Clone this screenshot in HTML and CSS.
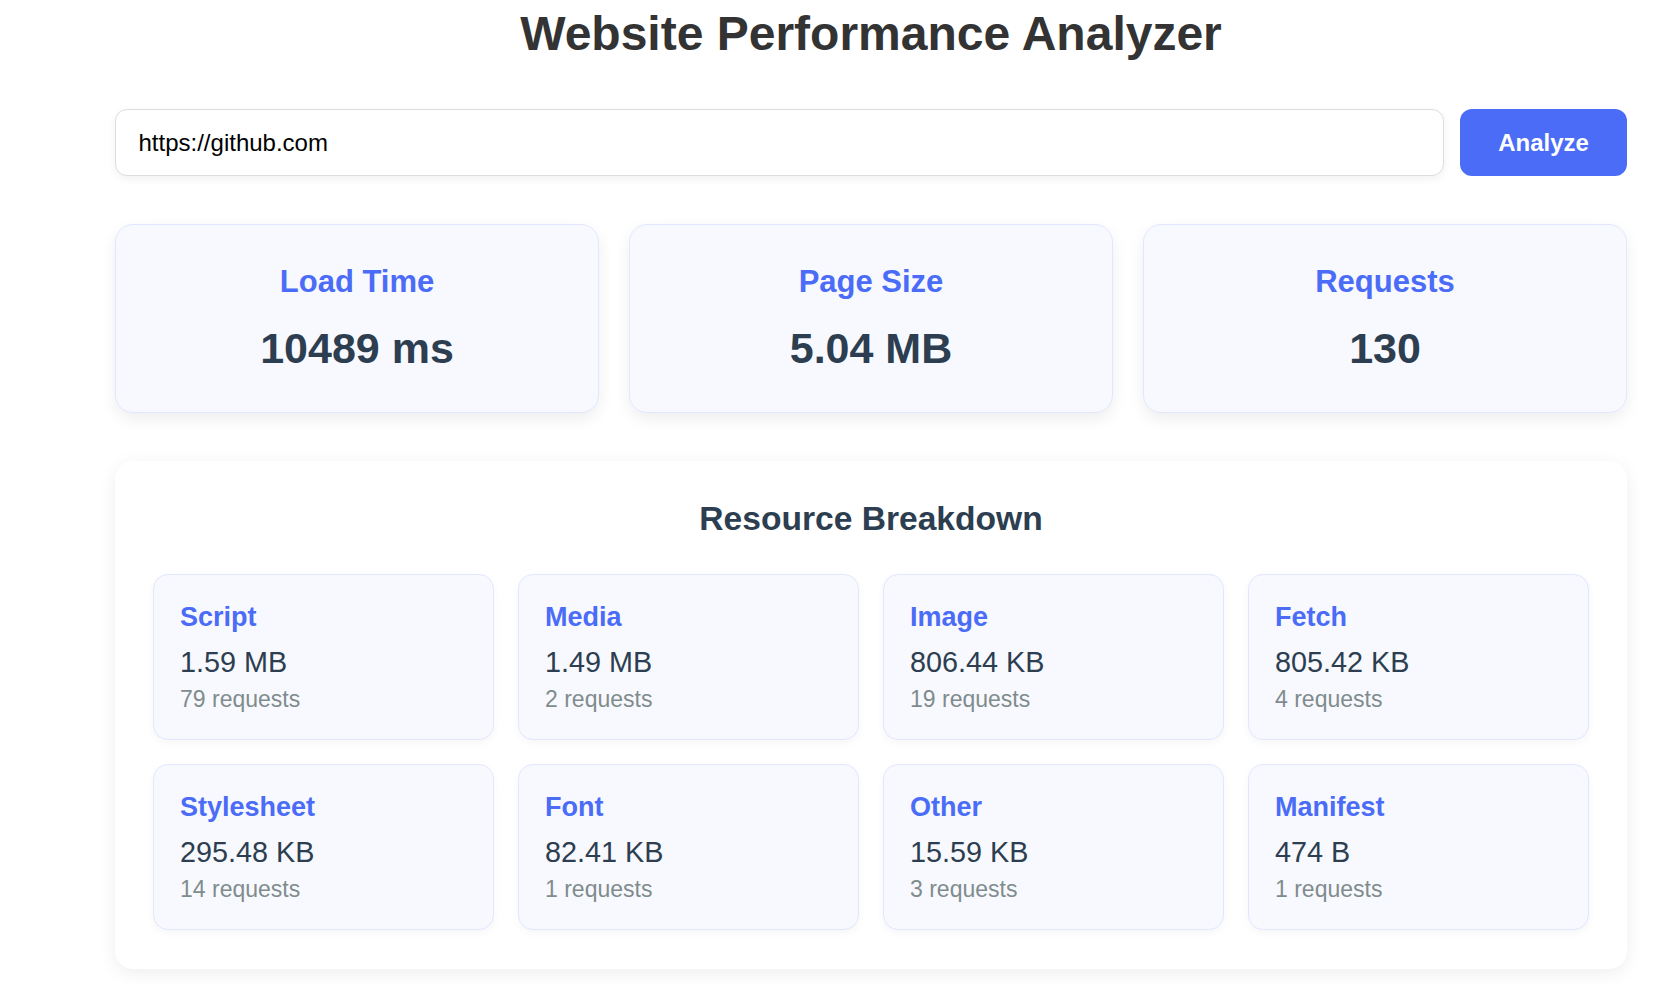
FILE: index.html
```html
<!DOCTYPE html>
<html lang="en">
<head>
<meta charset="utf-8">
<title>Website Performance Analyzer</title>
<link rel="stylesheet" href="styles.css">
</head>
<body>
<div class="page">
  <h1 class="title">Website Performance Analyzer</h1>

  <form class="search" onsubmit="return false">
    <input class="url-input" type="text" value="https://github.com">
    <button class="analyze-btn" type="submit">Analyze</button>
  </form>

  <section class="stats">
    <div class="stat-card">
      <h3 class="stat-label">Load Time</h3>
      <div class="stat-value">10489 ms</div>
    </div>
    <div class="stat-card">
      <h3 class="stat-label">Page Size</h3>
      <div class="stat-value">5.04 MB</div>
    </div>
    <div class="stat-card">
      <h3 class="stat-label">Requests</h3>
      <div class="stat-value">130</div>
    </div>
  </section>

  <section class="breakdown">
    <h2 class="breakdown-title">Resource Breakdown</h2>
    <div class="res-grid">
      <div class="res-card"><div class="res-type">Script</div><div class="res-size">1.59 MB</div><div class="res-count">79 requests</div></div>
      <div class="res-card"><div class="res-type">Media</div><div class="res-size">1.49 MB</div><div class="res-count">2 requests</div></div>
      <div class="res-card"><div class="res-type">Image</div><div class="res-size">806.44 KB</div><div class="res-count">19 requests</div></div>
      <div class="res-card"><div class="res-type">Fetch</div><div class="res-size">805.42 KB</div><div class="res-count">4 requests</div></div>
      <div class="res-card"><div class="res-type">Stylesheet</div><div class="res-size">295.48 KB</div><div class="res-count">14 requests</div></div>
      <div class="res-card"><div class="res-type">Font</div><div class="res-size">82.41 KB</div><div class="res-count">1 requests</div></div>
      <div class="res-card"><div class="res-type">Other</div><div class="res-size">15.59 KB</div><div class="res-count">3 requests</div></div>
      <div class="res-card"><div class="res-type">Manifest</div><div class="res-size">474 B</div><div class="res-count">1 requests</div></div>
    </div>
  </section>
</div>
</body>
</html>
```

FILE: styles.css
```css
* { box-sizing: border-box; }

html, body {
  margin: 0;
  padding: 0;
  background: #ffffff;
}

body {
  font-family: "Liberation Sans", Arial, sans-serif;
  color: #333333;
}

.page {
  width: 1512px;
  margin-left: 115px;
  padding-top: 6px;
  padding-bottom: 30px;
}

.title {
  margin: 0;
  text-align: center;
  font-size: 48px;
  font-weight: bold;
  color: #333333;
  line-height: normal;
}

.search {
  display: flex;
  gap: 16px;
  margin-top: 48px;
}

.url-input {
  flex: 1;
  height: 67px;
  padding: 0 22.5px;
  font-family: "Liberation Sans", Arial, sans-serif;
  font-size: 24px;
  color: #000000;
  border: 1.5px solid #dddddd;
  border-radius: 12px;
  background: #ffffff;
  box-shadow: 0 3px 8px rgba(0, 0, 0, 0.06);
  outline: none;
}

.analyze-btn {
  width: 167px;
  height: 67px;
  padding: 0;
  font-family: "Liberation Sans", Arial, sans-serif;
  font-size: 24px;
  font-weight: bold;
  color: #ffffff;
  background: #4a6cf7;
  border: none;
  border-radius: 12px;
}

.stats {
  display: grid;
  grid-template-columns: repeat(3, 1fr);
  gap: 30px;
  margin-top: 48px;
}

.stat-card {
  height: 189px;
  padding: 38.5px 20px 34px;
  text-align: center;
  background: #f8f9fe;
  border: 1.5px solid #e2e7ff;
  border-radius: 18px;
  box-shadow: 0 6px 16px rgba(0, 0, 0, 0.07);
}

.stat-label {
  margin: 0;
  font-size: 31px;
  font-weight: bold;
  color: #4a6cf7;
  line-height: normal;
}

.stat-value {
  margin-top: 24.5px;
  font-size: 43px;
  font-weight: bold;
  color: #2c3e50;
  line-height: normal;
}

.breakdown {
  margin-top: 48px;
  padding: 38.5px 38px 39px;
  background: #ffffff;
  border-radius: 18px;
  box-shadow: 0 4px 18px rgba(0, 0, 0, 0.07);
}

.breakdown-title {
  margin: 0 0 36px;
  text-align: center;
  font-size: 33.6px;
  font-weight: bold;
  color: #2c3e50;
  line-height: normal;
}

.res-grid {
  display: grid;
  grid-template-columns: repeat(4, 1fr);
  gap: 24px;
}

.res-card {
  height: 166px;
  padding: 27px 26px 20px;
  background: #f8f9fe;
  border: 1.5px solid #e2e7ff;
  border-radius: 15px;
  box-shadow: 0 3px 8px rgba(0, 0, 0, 0.04);
}

.res-type {
  font-size: 27px;
  font-weight: bold;
  color: #4a6cf7;
  line-height: normal;
}

.res-size {
  margin-top: 13px;
  font-size: 28.8px;
  color: #2c3e50;
  line-height: normal;
}

.res-count {
  margin-top: 7px;
  font-size: 23px;
  color: #7f8c8d;
  line-height: normal;
}
```
